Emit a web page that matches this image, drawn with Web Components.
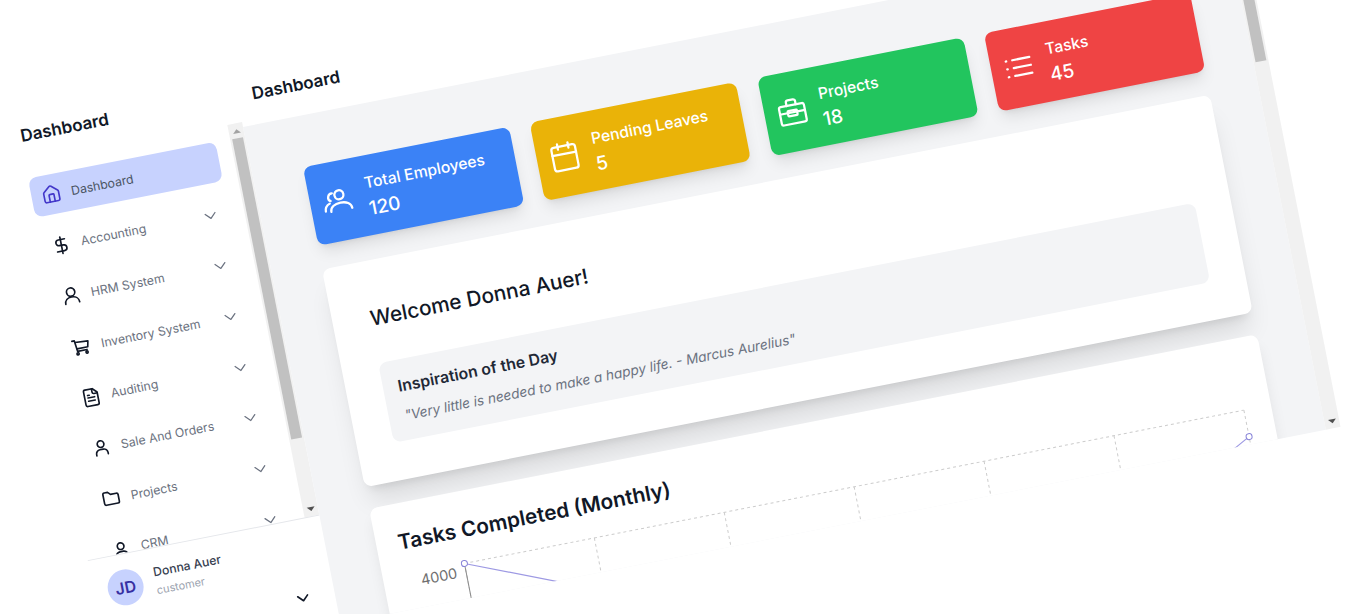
<!DOCTYPE html>
<html lang="en">
<head>
<meta charset="utf-8">
<title>Dashboard</title>
<style>
html,body{margin:0;padding:0;background:#fff;overflow:hidden;width:1364px;height:614px}
body{font-family:Inter,"Noto Sans",sans-serif}
</style>
</head>
<body>
<app-shell></app-shell>
<script>
const ICONS={
 home:'<path d="M15 21v-8a1 1 0 0 0-1-1h-4a1 1 0 0 0-1 1v8"/><path d="M3 10a2 2 0 0 1 .709-1.528l7-5.999a2 2 0 0 1 2.582 0l7 5.999A2 2 0 0 1 21 10v9a2 2 0 0 1-2 2H5a2 2 0 0 1-2-2z"/>',
 dollar:'<path d="M12 2v20"/><path d="M17 5H9.5a3.5 3.5 0 0 0 0 7h5a3.5 3.5 0 0 1 0 7H6"/>',
 user:'<circle cx="12" cy="8" r="5"/><path d="M3.500 21.500c0-4.500 3.500-7.500 8.500-7.500s8.500 3 8.500 7.500"/>',
 user2:'<circle cx="12" cy="8" r="4"/><path d="M5 21v-1.500a5 5 0 0 1 5-5h4a5 5 0 0 1 5 5V21"/>',
 cart:'<circle cx="6.500" cy="20" r="1.300"/><circle cx="17.500" cy="20" r="1.300"/><path d="M18 17H6.500L5 4H2"/><path d="M5.500 6 21 7l-1.500 7H6.500"/>',
 file:'<path d="M15 2H6a2 2 0 0 0-2 2v16a2 2 0 0 0 2 2h12a2 2 0 0 0 2-2V7Z"/><path d="M14 2v4a2 2 0 0 0 2 2h4"/><path d="M8 12h8M8 16h8M8 9h2"/>',
 folder:'<path d="M5 4h4l3 3h7a2 2 0 0 1 2 2v8a2 2 0 0 1-2 2H5a2 2 0 0 1-2-2V6a2 2 0 0 1 2-2"/>',
 chevron:'<path d="m6 9 6 6 6-6"/>',
 users:'<circle cx="13.500" cy="7.500" r="3.400"/><path d="M5.500 19c0-3.500 3.500-5.500 8-5.500s8 2 8 5.500"/><path d="M8.500 5.500a3 3 0 0 0-2 5.500"/><path d="M1.500 18c0-2.800 1.800-4.500 4-5.300"/>',
 calendar:'<path d="M8 2v4M16 2v4"/><rect x="3" y="4" width="18" height="18" rx="2"/><path d="M3 10h18"/>',
 briefcase:'<rect x="2.500" y="7" width="19" height="14" rx="1.500"/><path d="M8.500 7V4.500a1.500 1.500 0 0 1 1.500-1.500h4a1.500 1.500 0 0 1 1.500 1.500V7"/><path d="M2.500 12.500h19"/><rect x="8.500" y="11" width="7" height="4" rx=".5"/>',
 list:'<path d="M8 6h13M8 12h13M8 18h13"/><path d="M3 6h.4M3 12h.4M3 18h.4"/>'
};
class UiIcon extends HTMLElement{
 connectedCallback(){
  const s=this.getAttribute('size')||20,w=this.getAttribute('stroke')||2;
  if(!this.shadowRoot)this.attachShadow({mode:'open'});
  this.shadowRoot.innerHTML=`<style>:host{display:inline-flex;flex:none;width:${s}px;height:${s}px}svg{display:block}</style><svg xmlns="http://www.w3.org/2000/svg" width="${s}" height="${s}" viewBox="0 0 24 24" fill="none" stroke="currentColor" stroke-width="${w}" stroke-linecap="round" stroke-linejoin="round">${ICONS[this.getAttribute('name')]||''}</svg>`;
 }
}
customElements.define('ui-icon',UiIcon);

class FakeScrollbar extends HTMLElement{
 connectedCallback(){
  const t=this.getAttribute('thumb')||100,up=this.getAttribute('up')||'#a3a3a3';
  this.attachShadow({mode:'open'}).innerHTML=`<style>
  :host{display:flex;flex-direction:column;flex:none;width:15px;background:#f1f1f1}
  .b{height:15px;flex:none;display:flex;align-items:center;justify-content:center}
  .u{width:0;height:0;border:4px solid transparent;border-top:0;border-bottom:4px solid ${up}}
  .d{width:0;height:0;border:4px solid transparent;border-bottom:0;border-top:4px solid #505050}
  .t{height:${t}px;background:#c1c1c1;flex:none;margin:0 2px}
  .r{flex:1}
  </style><div class="b"><div class="u"></div></div><div class="t"></div><div class="r"></div><div class="b"><div class="d"></div></div>`;
 }
}
customElements.define('fake-scrollbar',FakeScrollbar);

class NavItem extends HTMLElement{
 connectedCallback(){
  const a=this.hasAttribute('active');
  this.attachShadow({mode:'open'}).innerHTML=`<style>
  :host{display:flex;align-items:center;height:40px;flex:none;padding:0 9px 0 10px;border-radius:8px;box-sizing:border-box;
   background:${a?'#c7d2fe':'transparent'};color:${a?'#4b5563':'#6b7280'};font-size:12.300px;gap:10px}
  .i{color:${a?'#4338ca':'#111827'};display:inline-flex}
  .t{flex:1;white-space:nowrap}
  .c{color:#6b7280;display:inline-flex}
  </style><span class="i"><ui-icon name="${this.getAttribute('icon')}" size="20" stroke="2"></ui-icon></span><span class="t"><slot></slot></span>${a?'':'<span class="c"><ui-icon name="chevron" size="20" stroke="1.500"></ui-icon></span>'}`;
 }
}
customElements.define('nav-item',NavItem);

class SideBar extends HTMLElement{
 connectedCallback(){
  this.attachShadow({mode:'open'}).innerHTML=`<style>
  :host{display:flex;flex-direction:column;width:236px;flex:none;background:#fff}
  .title{height:59px;box-sizing:border-box;padding:18px 0 0 16px;font-size:17px;line-height:24px;font-weight:600;color:#111827}
  .scroll{height:400px;display:flex;flex:none}
  nav{flex:1;overflow:hidden;padding:14px 15px 0 15px;display:flex;flex-direction:column;gap:11.7px;min-width:0}
  .foot{border-top:1px solid #e5e7eb;padding:15px 22px 0 14px;display:grid;grid-template-columns:36px 1fr;grid-template-rows:36px auto;column-gap:12px}
  .av{width:36px;height:36px;border-radius:50%;background:#c7d2fe;color:#3730a3;font-weight:600;font-size:16px;display:flex;align-items:center;justify-content:center}
  .n{font-size:12.200px;line-height:18px;color:#374151;font-weight:500}
  .r{font-size:11px;line-height:18px;color:#9ca3af}
  .ch{grid-column:2;justify-self:end;margin-top:17px;color:#111827;display:inline-flex}
  </style>
  <div class="title">Dashboard</div>
  <div class="scroll"><nav>
   <nav-item icon="home" active>Dashboard</nav-item>
   <nav-item icon="dollar">Accounting</nav-item>
   <nav-item icon="user">HRM System</nav-item>
   <nav-item icon="cart">Inventory System</nav-item>
   <nav-item icon="file">Auditing</nav-item>
   <nav-item icon="user2">Sale And Orders</nav-item>
   <nav-item icon="folder">Projects</nav-item>
   <nav-item icon="user2">CRM</nav-item>
  </nav><fake-scrollbar thumb="306"></fake-scrollbar></div>
  <div class="foot"><div class="av">JD</div><div class="who"><div class="n">Donna Auer</div><div class="r">customer</div></div><span class="ch"><ui-icon name="chevron" size="20" stroke="2"></ui-icon></span></div>`;
 }
}
customElements.define('side-bar',SideBar);

class StatCard extends HTMLElement{
 connectedCallback(){
  this.attachShadow({mode:'open'}).innerHTML=`<style>
  :host{display:flex;align-items:center;gap:13px;height:79.500px;box-sizing:border-box;padding:0 12px;border-radius:8px;color:#fff;
   background:${this.getAttribute('color')};box-shadow:0 10px 15px -3px rgba(0,0,0,.1),0 4px 6px -4px rgba(0,0,0,.1)}
  .tx{padding-top:4px}
  .l{font-size:15.700px;line-height:24px;font-weight:500;white-space:nowrap}
  .v{font-size:19px;line-height:28px;font-weight:500}
  </style><ui-icon name="${this.getAttribute('icon')}" size="32" stroke="1.700"></ui-icon><div class="tx"><div class="l">${this.getAttribute('label')}</div><div class="v">${this.getAttribute('value')}</div></div>`;
 }
}
customElements.define('stat-card',StatCard);

class WelcomeCard extends HTMLElement{
 connectedCallback(){
  this.attachShadow({mode:'open'}).innerHTML=`<style>
  :host{display:block;height:222px;box-sizing:border-box;background:#fff;border-radius:8px;padding:42.300px 36px 38px 37px;
   box-shadow:0 20px 25px -5px rgba(0,0,0,.1),0 8px 10px -6px rgba(0,0,0,.1)}
  h2{margin:0 0 0 1px;font-size:20.800px;line-height:32px;font-weight:500;color:#111827}
  .b{margin-top:29.700px;height:81px;box-sizing:border-box;background:#f3f4f6;border-radius:8px;padding:14.400px 15px}
  h3{margin:0 0 5px;font-size:15.800px;line-height:24px;font-weight:600;color:#1f2937}
  p{margin:0 0 0 1px;font-size:13.700px;line-height:24px;font-style:italic;color:#6b7280}
  </style><h2>Welcome Donna Auer!</h2><div class="b"><h3>Inspiration of the Day</h3><p>"Very little is needed to make a happy life. - Marcus Aurelius"</p></div>`;
 }
}
customElements.define('welcome-card',WelcomeCard);

class ChartCard extends HTMLElement{
 connectedCallback(){
  const xs=[0,1,2,3,4,5,6].map(i=>61+132.4*i);
  this.attachShadow({mode:'open'}).innerHTML=`<style>
  :host{display:block;background:#fff;border-radius:8px;padding:24.500px 18px 20px 22px;box-shadow:0 10px 15px -3px rgba(0,0,0,.1)}
  h2{margin:0 0 9px;font-size:20.800px;line-height:28px;font-weight:600;color:#111827}
  svg{display:block;font-family:Inter,sans-serif}
  </style><h2>Tasks Completed (Monthly)</h2>
  <svg xmlns="http://www.w3.org/2000/svg" width="865" height="320" viewBox="0 0 865 320">
   <g stroke="#ccc" stroke-dasharray="3 3" fill="none">
    <path d="M61 10H855.400"/>${xs.map(x=>`<path d="M${x} 10V300"/>`).join('')}
   </g>
   <path d="M61 10V300" stroke="#8a8a8a" fill="none"/>
   <text x="52" y="23" text-anchor="end" font-size="14.500" fill="#707070">4000</text>
   <path d="M61 10L193.400 64L326 90L458 120L590 130L723 108L855.400 37" stroke="#9d99e3" stroke-width="1.200" fill="none"/>
   <circle cx="61" cy="10" r="3" fill="#fff" stroke="#8884d8"/>
   <circle cx="855.400" cy="37" r="3" fill="#fff" stroke="#8884d8"/>
  </svg>`;
 }
}
customElements.define('chart-card',ChartCard);

class MainPanel extends HTMLElement{
 connectedCallback(){
  this.attachShadow({mode:'open'}).innerHTML=`<style>
  :host{display:flex;flex-direction:column;width:1019px;flex:none}
  header{height:64px;box-sizing:border-box;padding:21px 0 0 15px;font-size:17px;line-height:24px;font-weight:600;color:#111827}
  .s{height:506px;display:flex;flex:none}
  .c{flex:1;min-width:0;overflow:hidden;background:#f3f4f6;padding:51px 49px 0 50px;display:flex;flex-direction:column}
  .g{display:grid;grid-template-columns:repeat(4,1fr);gap:21.500px;margin:0 0 24px 1px;flex:none}
  welcome-card{margin-bottom:22.500px;flex:none}
  chart-card{flex:none}
  </style><header>Dashboard</header>
  <div class="s"><div class="c">
   <div class="g">
    <stat-card color="#3b82f6" icon="users" label="Total Employees" value="120"></stat-card>
    <stat-card color="#eab308" icon="calendar" label="Pending Leaves" value="5"></stat-card>
    <stat-card color="#22c55e" icon="briefcase" label="Projects" value="18"></stat-card>
    <stat-card color="#ef4444" icon="list" label="Tasks" value="45"></stat-card>
   </div>
   <welcome-card></welcome-card>
   <chart-card></chart-card>
  </div><fake-scrollbar thumb="117" up="#505050"></fake-scrollbar></div>`;
 }
}
customElements.define('main-panel',MainPanel);

class AppShell extends HTMLElement{
 connectedCallback(){
  this.attachShadow({mode:'open'}).innerHTML=`<style>
  :host{display:flex;width:1255px;transform-origin:0 0;transform:translate(243px,127px) rotate(-11.130deg) translate(-236px,-64px)}
  </style><side-bar></side-bar><main-panel></main-panel>`;
 }
}
customElements.define('app-shell',AppShell);
</script>
</body>
</html>
